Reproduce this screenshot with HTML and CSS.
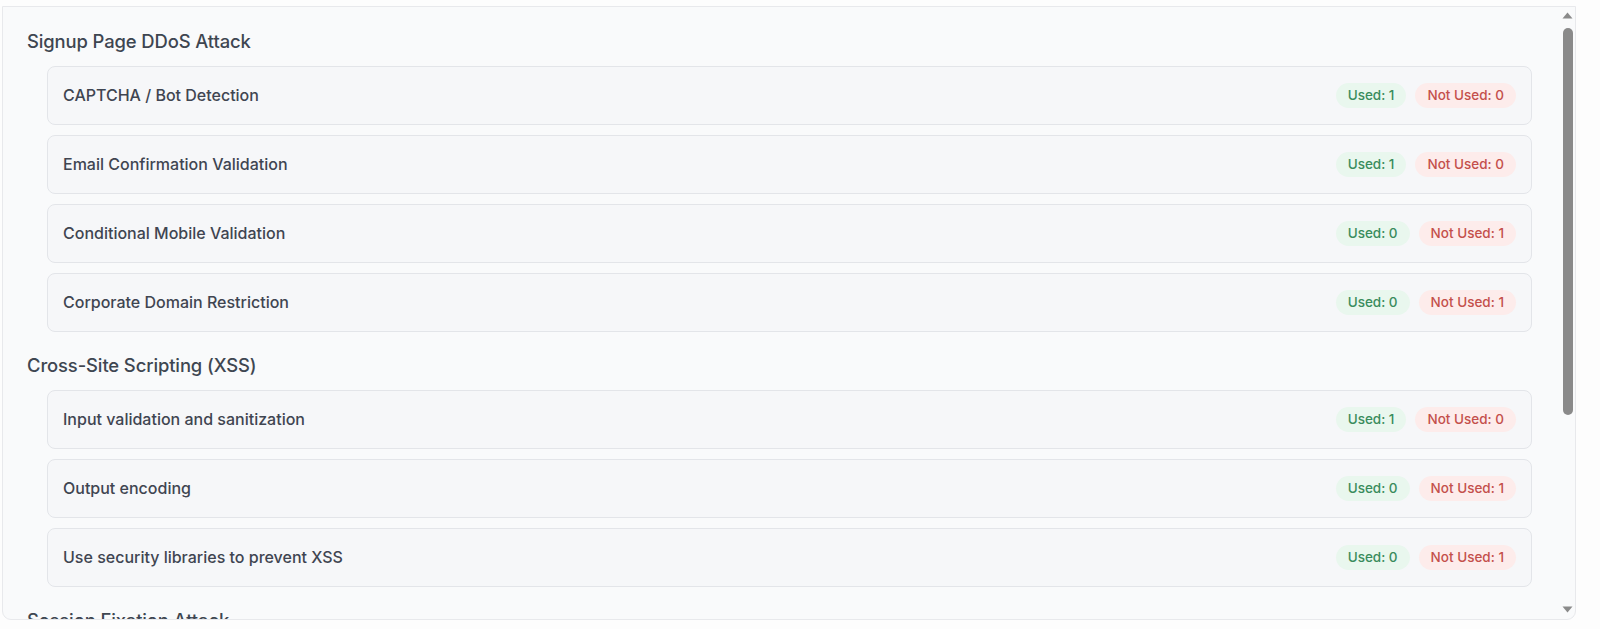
FILE: index.html
```html
<!DOCTYPE html>
<html lang="en">
<head>
<meta charset="utf-8">
<title>Security Controls</title>
<link rel="stylesheet" href="styles.css">
</head>
<body>
<div class="panel">
  <div class="content">
    <section class="group">
      <h3 class="group-title">Signup Page DDoS Attack</h3>
      <div class="items">
        <div class="item"><span class="item-name">CAPTCHA / Bot Detection</span><div class="badges"><span class="badge used">Used: 1</span><span class="badge unused">Not Used: 0</span></div></div>
        <div class="item"><span class="item-name">Email Confirmation Validation</span><div class="badges"><span class="badge used">Used: 1</span><span class="badge unused">Not Used: 0</span></div></div>
        <div class="item"><span class="item-name">Conditional Mobile Validation</span><div class="badges"><span class="badge used">Used: 0</span><span class="badge unused">Not Used: 1</span></div></div>
        <div class="item"><span class="item-name">Corporate Domain Restriction</span><div class="badges"><span class="badge used">Used: 0</span><span class="badge unused">Not Used: 1</span></div></div>
      </div>
    </section>
    <section class="group">
      <h3 class="group-title">Cross-Site Scripting (XSS)</h3>
      <div class="items">
        <div class="item"><span class="item-name">Input validation and sanitization</span><div class="badges"><span class="badge used">Used: 1</span><span class="badge unused">Not Used: 0</span></div></div>
        <div class="item"><span class="item-name">Output encoding</span><div class="badges"><span class="badge used">Used: 0</span><span class="badge unused">Not Used: 1</span></div></div>
        <div class="item"><span class="item-name">Use security libraries to prevent XSS</span><div class="badges"><span class="badge used">Used: 0</span><span class="badge unused">Not Used: 1</span></div></div>
      </div>
    </section>
    <section class="group">
      <h3 class="group-title">Session Fixation Attack</h3>
    </section>
  </div>
  <div class="scrollbar" aria-hidden="true">
    <svg class="arrow up" width="11" height="7" viewBox="0 0 11 7"><path d="M5.5 0.5 L10.5 6.5 L0.5 6.5 Z" fill="#8a8a8a"/></svg>
    <div class="thumb"></div>
    <div class="track-rest"></div>
    <svg class="arrow down" width="11" height="7" viewBox="0 0 11 7"><path d="M0.5 0.5 L10.5 0.5 L5.5 6.5 Z" fill="#8a8a8a"/></svg>
  </div>
</div>
</body>
</html>
```
FILE: styles.css
```css
html, body {
  margin: 0;
  padding: 0;
  background: #fdfdfd;
}
body {
  padding: 6px 24px 0 2px;
  font-family: "Inter", "Noto Sans", sans-serif;
}
.panel {
  box-sizing: border-box;
  height: 614px;
  display: flex;
  background: #f9fafb;
  border: 1px solid #e8e9ec;
  border-radius: 0 0 9px 9px;
  overflow: hidden;
}
.content {
  flex: 1;
  min-width: 0;
  overflow: hidden;
  padding: 21px 28px 0 24px;
  display: flex;
  flex-direction: column;
  gap: 20px;
}
.group-title {
  margin: 0 0 11px 0;
  font-size: 18.4px;
  line-height: 27px;
  font-weight: 500;
  color: #3e4651;
  letter-spacing: -0.1px;
  white-space: nowrap;
}
.items {
  display: flex;
  flex-direction: column;
  gap: 10px;
  margin-left: 20px;
}
.item {
  display: flex;
  align-items: center;
  justify-content: space-between;
  background: #f6f7f9;
  border: 1px solid #e3e5e9;
  border-radius: 8px;
  padding: 16px 15px 16px 15px;
}
.item-name {
  font-size: 16px;
  line-height: 25px;
  font-weight: 500;
  color: #3f4551;
}
.badges {
  display: flex;
  gap: 9px;
}
.badge {
  font-size: 13.5px;
  line-height: 25px;
  font-weight: 500;
  padding: 0 12px;
  border-radius: 13px;
}
.used {
  background: #e9f7ee;
  color: #3a8c5d;
}
.unused {
  background: #fdeceb;
  color: #c4504b;
}
.scrollbar {
  width: 15px;
  flex: none;
  display: flex;
  flex-direction: column;
  align-items: center;
}
.arrow {
  display: block;
  flex: none;
}
.arrow.up {
  margin-top: 5px;
}
.thumb {
  margin-top: 9px;
  width: 10px;
  height: 387px;
  border-radius: 5px;
  background: #8a8a8a;
}
.track-rest {
  flex: 1;
}
.arrow.down {
  margin-bottom: 6px;
}
```
